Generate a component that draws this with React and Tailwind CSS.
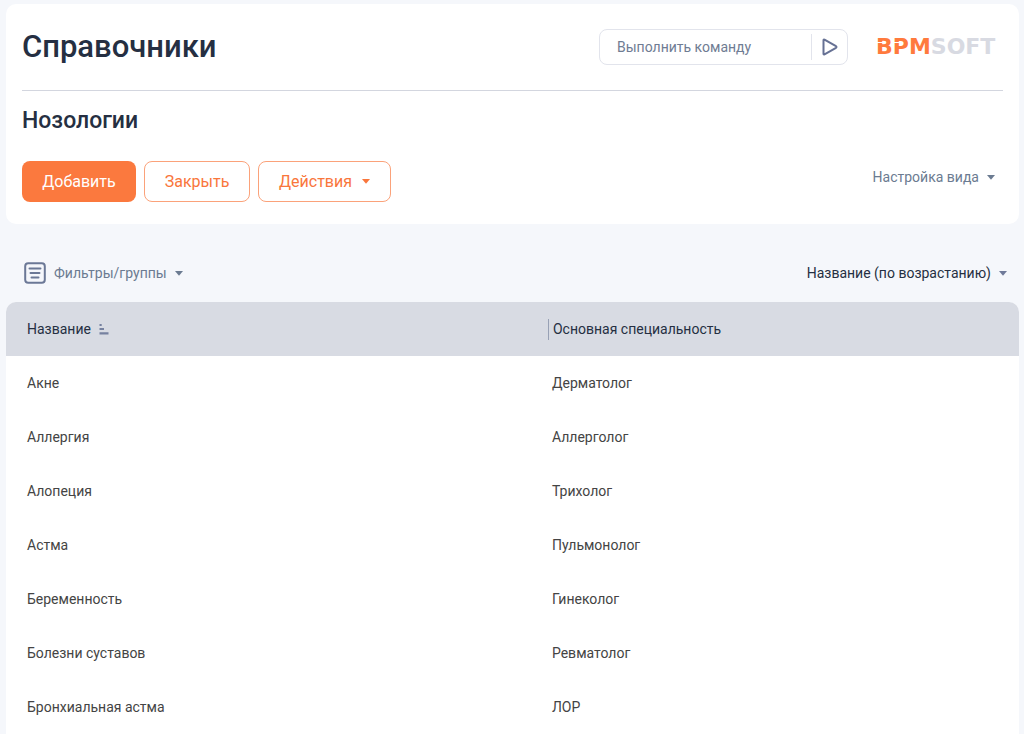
import React, { useState } from 'react';

const records = [
  { id: 1, name: 'Акне', specialty: 'Дерматолог' },
  { id: 2, name: 'Аллергия', specialty: 'Аллерголог' },
  { id: 3, name: 'Алопеция', specialty: 'Трихолог' },
  { id: 4, name: 'Астма', specialty: 'Пульмонолог' },
  { id: 5, name: 'Беременность', specialty: 'Гинеколог' },
  { id: 6, name: 'Болезни суставов', specialty: 'Ревматолог' },
  { id: 7, name: 'Бронхиальная астма', specialty: 'ЛОР' },
];

const Caret = ({ className = '' }) => (
  <svg viewBox="0 0 8 5" className={`h-[5px] w-2 shrink-0 ${className}`} fill="currentColor" aria-hidden="true">
    <path d="M0 0h8L4 4.8z" />
  </svg>
);

const Logo = () => (
  <svg viewBox="0 0 127 32" className="h-8 w-[127px] shrink-0" role="img" aria-label="BPMSoft">
    <text x="0" y="23" fontFamily="'DejaVu Sans', sans-serif" fontWeight="700" fontSize="22">
      <tspan fill="#ff7a3d">BPM</tspan>
      <tspan fill="#d8dae2">SOFT</tspan>
    </text>
    <path d="M0 11.500h7M17 11.500h7" stroke="#fff" strokeWidth="1" />
  </svg>
);

const FilterIcon = () => (
  <svg viewBox="0 0 22 22" className="h-[22px] w-[22px] shrink-0" fill="none" stroke="#6b7896" strokeLinecap="round" aria-hidden="true">
    <rect x="1.200" y="1.200" width="19.600" height="19.600" rx="3" strokeWidth="2" />
    <path d="M5.500 6.500h11M6.500 11h9M7.500 15.500h7" strokeWidth="2" />
  </svg>
);

const SortIcon = () => (
  <svg viewBox="0 0 10 11" className="h-[11px] w-[10px] shrink-0 text-[#7681a0]" fill="currentColor" aria-hidden="true">
    <path d="M.5 0h2.200v2H.5zM.5 4h4.500v2H.5zM.5 8.300h9v2.200h-9z" />
  </svg>
);

// --- Шапка раздела ---
const SectionHeader = () => {
  const [command, setCommand] = useState('');

  return (
    <header className="rounded-[10px] bg-white px-4 py-[22px]">
      <div className="flex items-center border-b border-[#d3d6df] pb-[22px]">
        <h1 className="flex-1 text-[31px] leading-[42px] font-medium text-[#252f42]">Справочники</h1>
        <form
          className="flex h-9 w-[249px] items-center rounded-lg border border-[#e2e4ec]"
          onSubmit={(e) => e.preventDefault()}
        >
          <input
            type="text"
            aria-label="Выполнить команду"
            placeholder="Выполнить команду"
            value={command}
            onChange={(e) => setCommand(e.target.value)}
            className="h-full min-w-0 flex-1 pl-[17px] text-sm outline-none placeholder:text-[#6f7c93]"
          />
          <button type="submit" aria-label="Выполнить" className="flex h-[26px] w-9 items-center justify-center border-l border-[#e2e4ec] text-[#667194]">
            <svg viewBox="0 0 16 18" className="h-[18px] w-4" fill="none" stroke="currentColor" strokeWidth="2" strokeLinejoin="round" aria-hidden="true">
              <path d="M1.500 2.200v13.600q0 1 1 .500l11.500-6.500q1-.8 0-1.600L2.500 1.700q-1-.5-1 .5z" />
            </svg>
          </button>
        </form>
        <div className="ml-7">
          <Logo />
        </div>
      </div>

      <h2 className="mt-[14px] text-[23px] leading-8 font-medium text-[#252f42]">Нозологии</h2>

      <div className="mt-6 flex items-start justify-between">
        <div className="flex gap-2 text-base">
          <button type="button" className="h-[41px] w-[114px] rounded-lg bg-[#fb793e] text-white">
            Добавить
          </button>
          <button type="button" className="h-[41px] w-[106px] rounded-lg border border-[#fba27a] text-[#f9763c]">
            Закрыть
          </button>
          <button type="button" className="flex h-[41px] w-[133px] items-center justify-center gap-2.5 rounded-lg border border-[#fba27a] text-[#f9763c]">
            Действия
            <Caret />
          </button>
        </div>
        <button type="button" className="mr-2 flex h-8 items-center gap-2 text-sm text-[#6b7b91]">
          Настройка вида
          <Caret />
        </button>
      </div>
    </header>
  );
};

// --- Таблица записей ---
const RecordsTable = () => (
  <table className="w-full table-fixed overflow-hidden rounded-t-[10px] bg-white text-left text-sm">
    <thead>
      <tr className="h-[54px] bg-[#d8dbe3] text-[#252f42]">
        <th scope="col" className="w-[53.5%] pl-[21px] font-normal">
          <button type="button" className="flex items-center gap-2">
            Название
            <SortIcon />
          </button>
        </th>
        <th scope="col" className="font-normal">
          <div className="border-l border-[#98a1b5] pl-1 leading-[21px]">Основная специальность</div>
        </th>
      </tr>
    </thead>
    <tbody className="text-[#444]">
      {records.map((record) => (
        <tr key={record.id} className="h-[54px]">
          <td className="pl-[21px]">{record.name}</td>
          <td className="pl-1">{record.specialty}</td>
        </tr>
      ))}
    </tbody>
  </table>
);

export default function App() {
  return (
    <div className="min-h-screen bg-[#f5f7fb] pt-1 pr-[5px] pl-1.5 font-['Roboto','Noto_Sans',sans-serif]">
      <SectionHeader />

      <main>
        <div className="flex h-[78px] items-center justify-between pt-5 pr-3 pl-[18px] text-sm">
          <button type="button" className="flex items-center gap-2 text-[#6b7b91]">
            <FilterIcon />
            <span>Фильтры/группы</span>
            <Caret />
          </button>
          <button type="button" className="flex items-center gap-2 text-[#252f42]">
            Название (по возрастанию)
            <Caret className="text-[#6f7a99]" />
          </button>
        </div>
        <RecordsTable />
      </main>
    </div>
  );
}
